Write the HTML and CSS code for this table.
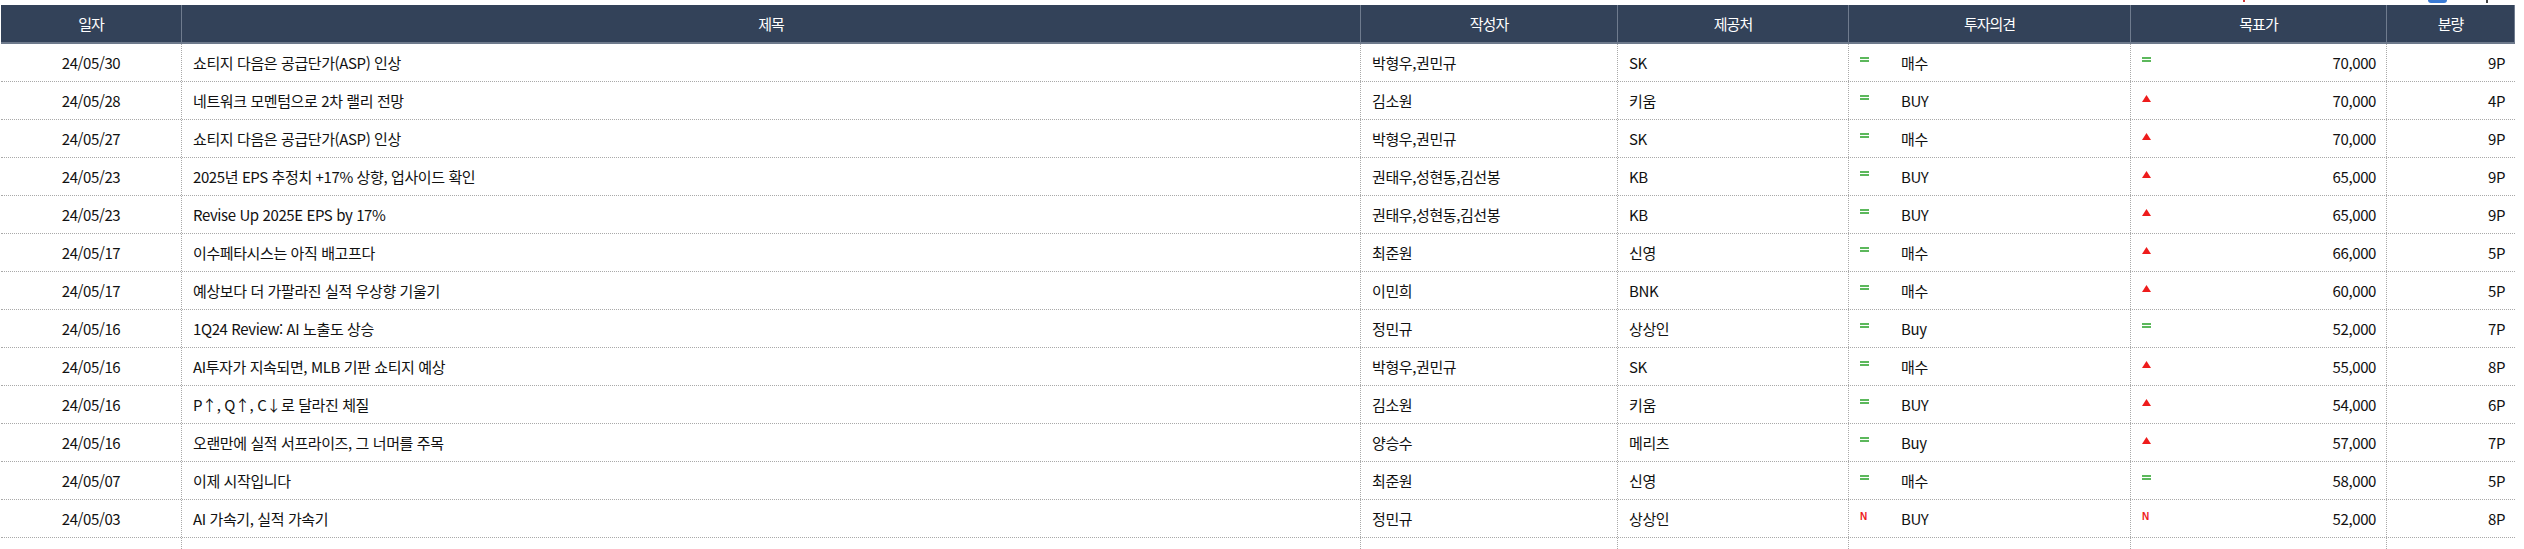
FILE: index.html
```html
<!DOCTYPE html>
<html lang="ko">
<head>
<meta charset="utf-8">
<title>리포트 목록</title>
<link rel="stylesheet" href="styles.css">
</head>
<body>
<div class="topbar">
  <span class="mark-red"></span>
  <span class="mark-blue"></span>
  <span class="mark-dark"></span>
</div>
<div class="grid">
  <div class="row head">
    <div class="c">일자</div><div class="c">제목</div><div class="c">작성자</div><div class="c">제공처</div><div class="c">투자의견</div><div class="c">목표가</div><div class="c">분량</div>
  </div>

  <div class="row">
    <div class="c date">24/05/30</div><div class="c">쇼티지 다음은 공급단가(ASP) 인상</div><div class="c">박형우,권민규</div><div class="c">SK</div>
    <div class="c op"><span class="ic"><svg class="eq" viewBox="0 0 9 5"><rect width="9" height="2"/><rect y="3" width="9" height="2"/></svg></span>매수</div>
    <div class="c tp"><span class="ic"><svg class="eq" viewBox="0 0 9 5"><rect width="9" height="2"/><rect y="3" width="9" height="2"/></svg></span><span>70,000</span></div>
    <div class="c pg">9P</div>
  </div>

  <div class="row">
    <div class="c date">24/05/28</div><div class="c">네트워크 모멘텀으로 2차 랠리 전망</div><div class="c">김소원</div><div class="c">키움</div>
    <div class="c op"><span class="ic"><svg class="eq" viewBox="0 0 9 5"><rect width="9" height="2"/><rect y="3" width="9" height="2"/></svg></span>BUY</div>
    <div class="c tp"><span class="ic"><svg class="up" viewBox="0 0 9 7"><polygon points="4.5,0 9,7 0,7"/></svg></span><span>70,000</span></div>
    <div class="c pg">4P</div>
  </div>

  <div class="row">
    <div class="c date">24/05/27</div><div class="c">쇼티지 다음은 공급단가(ASP) 인상</div><div class="c">박형우,권민규</div><div class="c">SK</div>
    <div class="c op"><span class="ic"><svg class="eq" viewBox="0 0 9 5"><rect width="9" height="2"/><rect y="3" width="9" height="2"/></svg></span>매수</div>
    <div class="c tp"><span class="ic"><svg class="up" viewBox="0 0 9 7"><polygon points="4.5,0 9,7 0,7"/></svg></span><span>70,000</span></div>
    <div class="c pg">9P</div>
  </div>

  <div class="row">
    <div class="c date">24/05/23</div><div class="c">2025년 EPS 추정치 +17% 상향, 업사이드 확인</div><div class="c">권태우,성현동,김선봉</div><div class="c">KB</div>
    <div class="c op"><span class="ic"><svg class="eq" viewBox="0 0 9 5"><rect width="9" height="2"/><rect y="3" width="9" height="2"/></svg></span>BUY</div>
    <div class="c tp"><span class="ic"><svg class="up" viewBox="0 0 9 7"><polygon points="4.5,0 9,7 0,7"/></svg></span><span>65,000</span></div>
    <div class="c pg">9P</div>
  </div>

  <div class="row">
    <div class="c date">24/05/23</div><div class="c">Revise Up 2025E EPS by 17%</div><div class="c">권태우,성현동,김선봉</div><div class="c">KB</div>
    <div class="c op"><span class="ic"><svg class="eq" viewBox="0 0 9 5"><rect width="9" height="2"/><rect y="3" width="9" height="2"/></svg></span>BUY</div>
    <div class="c tp"><span class="ic"><svg class="up" viewBox="0 0 9 7"><polygon points="4.5,0 9,7 0,7"/></svg></span><span>65,000</span></div>
    <div class="c pg">9P</div>
  </div>

  <div class="row">
    <div class="c date">24/05/17</div><div class="c">이수페타시스는 아직 배고프다</div><div class="c">최준원</div><div class="c">신영</div>
    <div class="c op"><span class="ic"><svg class="eq" viewBox="0 0 9 5"><rect width="9" height="2"/><rect y="3" width="9" height="2"/></svg></span>매수</div>
    <div class="c tp"><span class="ic"><svg class="up" viewBox="0 0 9 7"><polygon points="4.5,0 9,7 0,7"/></svg></span><span>66,000</span></div>
    <div class="c pg">5P</div>
  </div>

  <div class="row">
    <div class="c date">24/05/17</div><div class="c">예상보다 더 가팔라진 실적 우상향 기울기</div><div class="c">이민희</div><div class="c">BNK</div>
    <div class="c op"><span class="ic"><svg class="eq" viewBox="0 0 9 5"><rect width="9" height="2"/><rect y="3" width="9" height="2"/></svg></span>매수</div>
    <div class="c tp"><span class="ic"><svg class="up" viewBox="0 0 9 7"><polygon points="4.5,0 9,7 0,7"/></svg></span><span>60,000</span></div>
    <div class="c pg">5P</div>
  </div>

  <div class="row">
    <div class="c date">24/05/16</div><div class="c">1Q24 Review: AI 노출도 상승</div><div class="c">정민규</div><div class="c">상상인</div>
    <div class="c op"><span class="ic"><svg class="eq" viewBox="0 0 9 5"><rect width="9" height="2"/><rect y="3" width="9" height="2"/></svg></span>Buy</div>
    <div class="c tp"><span class="ic"><svg class="eq" viewBox="0 0 9 5"><rect width="9" height="2"/><rect y="3" width="9" height="2"/></svg></span><span>52,000</span></div>
    <div class="c pg">7P</div>
  </div>

  <div class="row">
    <div class="c date">24/05/16</div><div class="c">AI투자가 지속되면, MLB 기판 쇼티지 예상</div><div class="c">박형우,권민규</div><div class="c">SK</div>
    <div class="c op"><span class="ic"><svg class="eq" viewBox="0 0 9 5"><rect width="9" height="2"/><rect y="3" width="9" height="2"/></svg></span>매수</div>
    <div class="c tp"><span class="ic"><svg class="up" viewBox="0 0 9 7"><polygon points="4.5,0 9,7 0,7"/></svg></span><span>55,000</span></div>
    <div class="c pg">8P</div>
  </div>

  <div class="row">
    <div class="c date">24/05/16</div><div class="c">P↑, Q↑, C↓로 달라진 체질</div><div class="c">김소원</div><div class="c">키움</div>
    <div class="c op"><span class="ic"><svg class="eq" viewBox="0 0 9 5"><rect width="9" height="2"/><rect y="3" width="9" height="2"/></svg></span>BUY</div>
    <div class="c tp"><span class="ic"><svg class="up" viewBox="0 0 9 7"><polygon points="4.5,0 9,7 0,7"/></svg></span><span>54,000</span></div>
    <div class="c pg">6P</div>
  </div>

  <div class="row">
    <div class="c date">24/05/16</div><div class="c">오랜만에 실적 서프라이즈, 그 너머를 주목</div><div class="c">양승수</div><div class="c">메리츠</div>
    <div class="c op"><span class="ic"><svg class="eq" viewBox="0 0 9 5"><rect width="9" height="2"/><rect y="3" width="9" height="2"/></svg></span>Buy</div>
    <div class="c tp"><span class="ic"><svg class="up" viewBox="0 0 9 7"><polygon points="4.5,0 9,7 0,7"/></svg></span><span>57,000</span></div>
    <div class="c pg">7P</div>
  </div>

  <div class="row">
    <div class="c date">24/05/07</div><div class="c">이제 시작입니다</div><div class="c">최준원</div><div class="c">신영</div>
    <div class="c op"><span class="ic"><svg class="eq" viewBox="0 0 9 5"><rect width="9" height="2"/><rect y="3" width="9" height="2"/></svg></span>매수</div>
    <div class="c tp"><span class="ic"><svg class="eq" viewBox="0 0 9 5"><rect width="9" height="2"/><rect y="3" width="9" height="2"/></svg></span><span>58,000</span></div>
    <div class="c pg">5P</div>
  </div>

  <div class="row">
    <div class="c date">24/05/03</div><div class="c">AI 가속기, 실적 가속기</div><div class="c">정민규</div><div class="c">상상인</div>
    <div class="c op"><span class="ic"><span class="new">N</span></span>BUY</div>
    <div class="c tp"><span class="ic"><span class="new">N</span></span><span>52,000</span></div>
    <div class="c pg">8P</div>
  </div>

  <div class="row">
    <div class="c"></div><div class="c"></div><div class="c"></div><div class="c"></div><div class="c"></div><div class="c"></div><div class="c"></div>
  </div>
</div>
</body>
</html>
```

FILE: styles.css
```css
html, body {
  margin: 0;
  padding: 0;
  background: #ffffff;
}

body {
  font-family: "Noto Sans CJK KR", "Noto Sans", sans-serif;
  font-size: 15px;
  letter-spacing: -0.4px;
  color: #111111;
  overflow: hidden;
  height: 549px;
}

.topbar {
  height: 5px;
  display: flex;
  align-items: flex-start;
  overflow: hidden;
}

.mark-red {
  margin-left: 2243px;
  width: 2px;
  height: 2px;
  background: #d03a3a;
}

.mark-blue {
  margin-left: 183px;
  width: 19px;
  height: 3px;
  background: #3a7bd5;
  border-radius: 0 0 3px 3px;
}

.mark-dark {
  margin-left: 39px;
  width: 2px;
  height: 3px;
  background: #444;
}

.grid {
  margin-left: 1px;
  width: 2514px;
}

.row {
  display: grid;
  grid-template-columns: 180px 1179px 257px 231px 282px 256px 129px;
  height: 38px;
  box-sizing: border-box;
  border-bottom: 1px dotted #a9a9a9;
}

.c {
  display: flex;
  align-items: center;
  padding: 0 10px 0 11px;
  box-sizing: border-box;
  white-space: nowrap;
  overflow: hidden;
}

.c + .c {
  border-left: 1px dotted #a9a9a9;
}

.head {
  height: 39px;
  background: #334259;
  border-bottom: 2px solid #6e7a8c;
}

.head .c {
  justify-content: center;
  color: #ffffff;
  font-size: 15px;
  letter-spacing: -1px;
  padding: 0 0 1px 0;
}

.head .c + .c {
  border-left: 1px solid #6f7b8e;
}

.head .c:last-child {
  border-right: 1px solid #6f7b8e;
}

.date {
  justify-content: center;
  padding: 0;
}

.op .ic {
  width: 41px;
}

.tp {
  justify-content: space-between;
}

.ic {
  align-self: flex-start;
  margin-top: 13px;
  display: flex;
  flex-shrink: 0;
}

.eq {
  width: 9px;
  height: 5px;
  fill: #5cb85c;
}

.up {
  width: 9px;
  height: 7px;
  fill: #ee1c1c;
}

.new {
  font-family: "Liberation Sans", Arial, sans-serif;
  font-weight: bold;
  font-size: 10px;
  line-height: 8px;
  letter-spacing: 0;
  color: #ee1c1c;
}

.pg {
  justify-content: flex-end;
}
```
